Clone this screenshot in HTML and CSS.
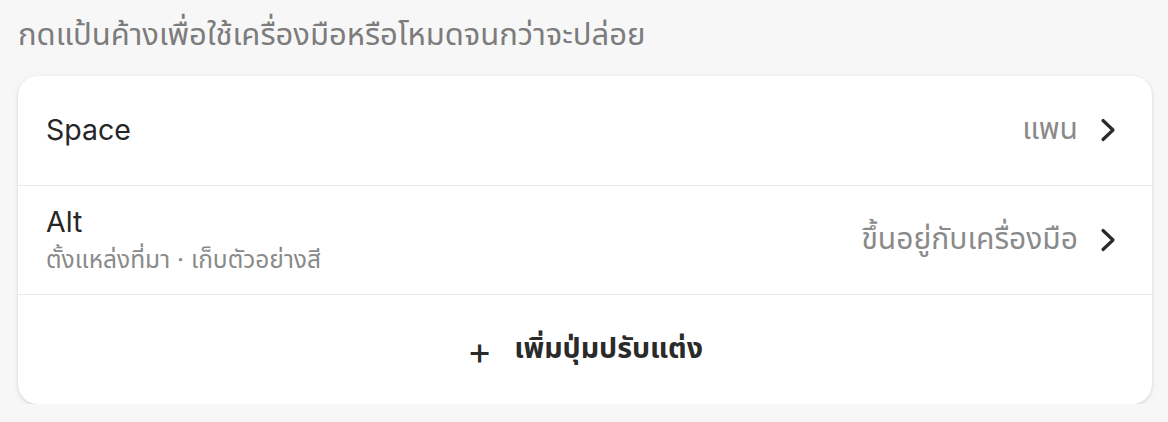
FILE: index.html
```html
<!DOCTYPE html>
<html lang="th">
<head>
<meta charset="utf-8">
<link rel="stylesheet" href="styles.css">
</head>
<body>
<div class="page">
  <div class="caption">กดแป้นค้างเพื่อใช้เครื่องมือหรือโหมดจนกว่าจะปล่อย</div>
  <div class="card">
    <div class="row">
      <div class="main">
        <div class="title">Space</div>
      </div>
      <div class="value">แพน</div>
      <svg class="chev" viewBox="0 0 16 24" width="16" height="24"><path d="M3 2.5 L13 12 L3 21.5" fill="none" stroke="#2b2b2b" stroke-width="3.2" stroke-linecap="round" stroke-linejoin="round"/></svg>
    </div>
    <div class="row">
      <div class="main">
        <div class="title">Alt</div>
        <div class="sub">ตั้งแหล่งที่มา · เก็บตัวอย่างสี</div>
      </div>
      <div class="value">ขึ้นอยู่กับเครื่องมือ</div>
      <svg class="chev" viewBox="0 0 16 24" width="16" height="24"><path d="M3 2.5 L13 12 L3 21.5" fill="none" stroke="#2b2b2b" stroke-width="3.2" stroke-linecap="round" stroke-linejoin="round"/></svg>
    </div>
    <div class="add">
      <span class="plus">+</span>
      <span class="add-label">เพิ่มปุ่มปรับแต่ง</span>
    </div>
  </div>
</div>
</body>
</html>
```
FILE: styles.css
```css
html, body {
  margin: 0;
  padding: 0;
  background: #f7f7f7;
}
body {
  font-family: Inter, "Noto Sans", "Noto Sans Thai", sans-serif;
  color: #222;
}
.page {
  padding: 14px 16px 0 18px;
  display: flex;
  flex-direction: column;
}
.caption {
  font-size: 31px;
  line-height: 40px;
  color: #7c7c7c;
  height: 62px;
}
.card {
  background: #fff;
  border-radius: 20px;
  box-shadow: 0 1px 3px rgba(0,0,0,0.12), 0 2px 8px rgba(0,0,0,0.05);
  width: 1134px;
  display: flex;
  flex-direction: column;
  overflow: hidden;
}
.row {
  height: 108.5px;
  border-bottom: 1.5px solid #e9e9e9;
  display: flex;
  align-items: center;
  padding: 0 36px 0 28px;
  box-sizing: content-box;
}
.main {
  flex: 1;
  display: flex;
  flex-direction: column;
}
.title {
  font-size: 28.5px;
  line-height: 34px;
  color: #262626;
}
.sub {
  font-size: 24.5px;
  line-height: 32px;
  color: #8a8a8a;
  margin-top: 4px;
}
.value {
  font-size: 30px;
  color: #8a8a8a;
  margin-right: 22px;
}
.chev {
  display: block;
}
.add {
  height: 109px;
  display: flex;
  align-items: center;
  justify-content: center;
  gap: 22px;
  font-size: 28.5px;
  font-weight: 700;
  color: #2a2a2a;
}
.plus {
  font-weight: 400;
  font-size: 38px;
}
```
